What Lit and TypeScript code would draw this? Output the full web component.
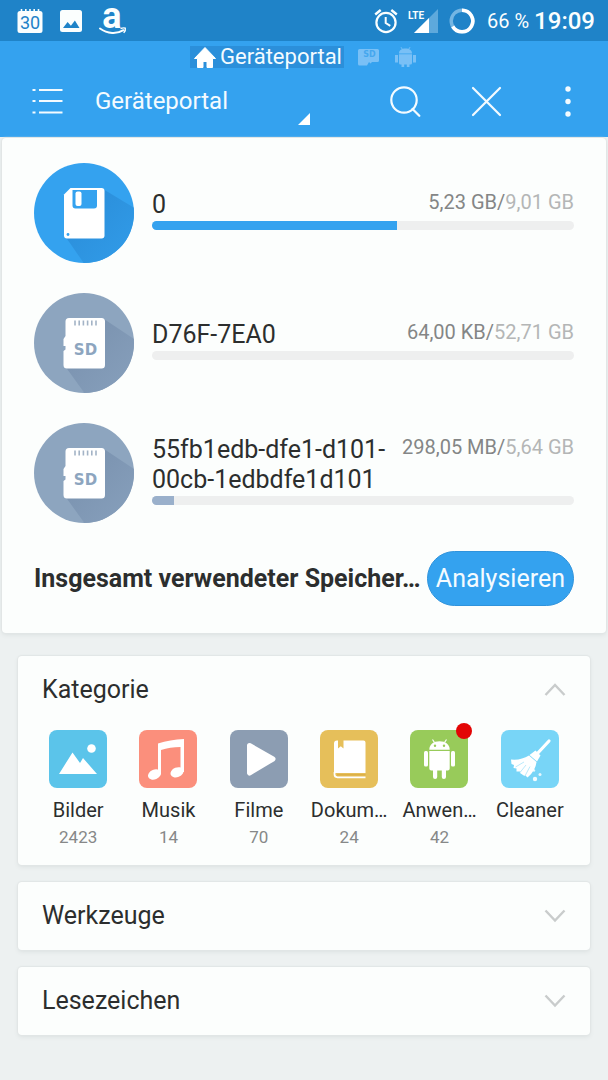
import { LitElement, html, css, svg, nothing, TemplateResult } from "lit";
import { customElement, property, state } from "lit/decorators.js";

/* ---------- status bar glyphs ---------- */

const calendarIcon = html`<svg width="26" height="26" viewBox="0 0 26 26" aria-hidden="true">
  <rect x="0.5" y="3" width="25" height="22" rx="2.5" fill="#fbfefe" />
  <path d="M4.5 1v3M8.8 1v3M13 1v3M17.2 1v3M21.500 1v3" stroke="#fbfefe" stroke-width="1.600" />
  <text x="13" y="21" text-anchor="middle" font-family="Roboto, sans-serif" font-size="18" fill="#1f83c8">30</text>
</svg>`;

const photoIcon = html`<svg width="22" height="22" viewBox="0 0 22 22" aria-hidden="true">
  <rect width="22" height="22" rx="2.5" fill="#fbfefe" />
  <path d="M3 18l4.600-6 3.300 3.800 4-5.300L19.500 18z" fill="#1f83c8" />
</svg>`;

const amazonIcon = html`<svg width="28" height="28" viewBox="0 0 28 28" aria-hidden="true">
  <text x="13" y="20.500" text-anchor="middle" font-family="Roboto, sans-serif" font-weight="700" font-size="36" fill="#fbfefe">a</text>
  <path d="M1 21.500c7.500 5.500 17 5.700 23.500 1.700" fill="none" stroke="#fbfefe" stroke-width="2" stroke-linecap="round" />
  <path d="M21.500 21.500c2-.7 4-.8 4.800-.3.400 1.200-.2 3-1.600 4.700" fill="none" stroke="#fbfefe" stroke-width="1.400" />
</svg>`;

const alarmIcon = html`<svg width="24" height="26" viewBox="0 0 24 26" fill="none" stroke="#fbfefe" aria-hidden="true">
  <circle cx="12" cy="14.500" r="9.600" stroke-width="2.200" />
  <path d="M11.700 9v6l4.600 2.800" stroke-width="2" />
  <path d="M1.200 6.500L6.700 2M22.800 6.500L17.300 2" stroke-width="2.400" />
</svg>`;

const signalIcon = html`<svg width="31" height="26" viewBox="0 0 31 26" aria-hidden="true">
  <path d="M30 1v24H6z" fill="#5ea9dc" />
  <path d="M21 10v15H6z" fill="#fff" />
  <path d="M0 0h17v12H0z" fill="#1f83c8" />
  <text x="0" y="11" font-family="'Liberation Sans Narrow', Roboto, sans-serif" font-weight="700" font-size="10" fill="#fbfefe">LTE</text>
</svg>`;

const batteryIcon = html`<svg width="26" height="26" viewBox="0 0 26 26" fill="none" aria-hidden="true">
  <circle cx="13" cy="13" r="10.800" stroke="#74b6e3" stroke-width="3.400" />
  <path d="M13 2.200A10.800 10.800 0 1 1 3.700 18.500" stroke="#fff" stroke-width="3.600" />
</svg>`;

/* ---------- header glyphs ---------- */

const homeIcon = html`<svg width="22" height="21" viewBox="0 0 22 21" aria-hidden="true">
  <path d="M11 .5L21.500 11.500H18.500V20.500H13V14.500H9V20.500H3.500V11.500H.5z" fill="#fff" stroke="#fff" stroke-linejoin="round" />
</svg>`;

const sdTabIcon = html`<svg width="21" height="17" viewBox="0 0 21 17" aria-hidden="true">
  <path d="M1.500 0h18a1.500 1.500 0 0 1 1.500 1.500v10a1.500 1.500 0 0 1-1.500 1.500H14l-1.500 1.500L11 13l-2 3.500H1.500A1.500 1.500 0 0 1 0 15V1.500A1.500 1.500 0 0 1 1.500 0z" fill="#79c0f6" />
  <text x="11.500" y="8" text-anchor="middle" font-family="'DejaVu Sans', sans-serif" font-weight="700" font-size="8" fill="#45a7ee">SD</text>
</svg>`;

const androidTabIcon = html`<svg width="21" height="20" viewBox="0 0 21 20" fill="#79c0f6" aria-hidden="true">
  <path d="M4 6.500C4 3 6.500 1.500 10.500 1.500S17 3 17 6.500zM4 7.300h13V16a1.500 1.500 0 0 1-1.500 1.500h-10A1.500 1.500 0 0 1 4 16zM0 8h3v7.500H0zM18 8h3v7.500h-3zM6.500 17h2.700v3H6.500zM11.800 17h2.700v3h-2.700z" />
  <path d="M6 .2L7.500 2.500M15 .2L13.500 2.500" stroke="#79c0f6" />
</svg>`;

const listIcon = html`<svg width="31" height="28" viewBox="0 0 31 28" stroke="#f4fbff" stroke-width="2.200" aria-hidden="true">
  <path d="M.5 3h3M.5 14h3M.5 25.500h3M7 3h23.500M7 14h23.500M7 25.500h23.500" />
</svg>`;

const searchIcon = html`<svg width="31" height="31" viewBox="0 0 31 31" fill="none" stroke="#f4fbff" stroke-width="2.200" aria-hidden="true">
  <circle cx="14" cy="14" r="12.700" />
  <path d="M22.500 23l6.800 6.800" stroke-linecap="round" />
</svg>`;

const closeIcon = html`<svg width="31" height="31" viewBox="0 0 31 31" fill="none" stroke="#f4fbff" stroke-width="2.200" stroke-linecap="round" aria-hidden="true">
  <path d="M2 2l27 27M29 2L2 29" />
</svg>`;

const moreIcon = html`<svg width="8" height="31" viewBox="0 0 8 31" fill="#f4fbff" aria-hidden="true">
  <circle cx="4" cy="3" r="2.700" /><circle cx="4" cy="15.500" r="2.700" /><circle cx="4" cy="28" r="2.700" />
</svg>`;

const cornerIcon = html`<svg width="12" height="12" viewBox="0 0 12 12" aria-hidden="true"><path d="M12 0v12H0z" fill="#fff" /></svg>`;

const chevron = (up: boolean) => html`<svg width="22" height="14" viewBox="0 0 22 14" fill="none" stroke="#c9cccc" stroke-width="2.400" aria-hidden="true">
  <path d=${up ? "M1.500 12L11 2L20.500 12" : "M1.500 1.500L11 11.500L20.500 1.500"} />
</svg>`;

/* ---------- storage discs ---------- */

const floppyDisc = html`<svg class="disc" viewBox="0 0 100 100" aria-hidden="true">
  <defs>
    <clipPath id="c"><circle cx="50" cy="50" r="50" /></clipPath>
    <linearGradient id="g" x1="0.200" y1="0.200" x2="1" y2="1"><stop offset="0" stop-color="#2b8fdb" /><stop offset="1" stop-color="#339fec" /></linearGradient>
  </defs>
  <circle cx="50" cy="50" r="50" fill="#34a2ef" />
  <path d="M69 26L112 52V112H58L31 73z" fill="url(#g)" clip-path="url(#c)" />
  <path d="M36.500 25H67.500a3 3 0 0 1 3 3V72.500a3 3 0 0 1-3 3H33a3 3 0 0 1-3-3V31.500z" fill="#fff" />
  <path d="M38.500 27h24.500V42.500a3 3 0 0 1-3 3H41.500a3 3 0 0 1-3-3z" fill="#34a2ef" />
  <rect x="41.500" y="28.500" width="6" height="14.500" rx="2" fill="#fff" />
  <circle cx="34" cy="71.500" r="1.400" fill="#34a2ef" />
</svg>`;

const sdDisc = html`<svg class="disc" viewBox="0 0 100 100" aria-hidden="true">
  <defs>
    <clipPath id="c"><circle cx="50" cy="50" r="50" /></clipPath>
    <linearGradient id="g" x1="0.200" y1="0.200" x2="1" y2="1"><stop offset="0" stop-color="#7b93b0" /><stop offset="1" stop-color="#8aa3bf" /></linearGradient>
  </defs>
  <circle cx="50" cy="50" r="50" fill="#8da5bf" />
  <path d="M70 26L112 54V112H59L31 73z" fill="url(#g)" clip-path="url(#c)" />
  <path d="M35 25H67.500a3.500 3.500 0 0 1 3.500 3.500V72a3.500 3.500 0 0 1-3.500 3.500H33A3.500 3.500 0 0 1 29.500 72V58l2-1.500V53H29.500V46l2-3V28.500A3.500 3.500 0 0 1 35 25z" fill="#fff" />
  <path d="M41 27.500v5M45.200 27.500v5M49.400 27.500v5M53.600 27.500v5M57.800 27.500v5M62 27.500v5" stroke="#a3b3c6" stroke-width="1.600" />
  <text x="51.500" y="61.500" text-anchor="middle" font-family="'DejaVu Sans', sans-serif" font-weight="700" font-size="15" fill="#8da5bf">SD</text>
</svg>`;

/* ---------- category tiles ---------- */

const tile = (color: string, art: TemplateResult<2>) => html`<svg class="tile" viewBox="0 0 58 58" aria-hidden="true">
  <rect width="58" height="58" rx="8" fill=${color} />${art}
</svg>`;

const pictureArt = svg`<path d="M10 44L23.500 22.500L31 33L34 28L48 44z" fill="#fff"/><circle cx="42.500" cy="18.500" r="4.300" fill="#fff"/>`;

const musicArt = svg`<path d="M19 13.500Q31 9.500 45 9V42h-3.500V17Q31 17 22 20V44h-3z" fill="#fff"/>
  <ellipse cx="15.500" cy="44.500" rx="6.800" ry="4.800" transform="rotate(-22 15.500 44.500)" fill="#fff"/>
  <ellipse cx="38" cy="42.300" rx="6.800" ry="4.800" transform="rotate(-22 38 42.300)" fill="#fff"/>`;

const playArt = svg`<path d="M19.500 15.500L43 29L19.500 43z" fill="#fff" stroke="#fff" stroke-width="5" stroke-linejoin="round"/>`;

const bookArt = svg`<path d="M17 10.500H43.500a2 2 0 0 1 2 2V43H16a2 2 0 0 0-2 2V13.500a3 3 0 0 1 3-3z" fill="#fff"/>
  <path d="M45.500 47.300H17.500a3 3 0 0 1-3-3V42" fill="none" stroke="#fff" stroke-width="1.700"/>
  <path d="M18 10h5.500v8.500l-2.700-2.300-2.800 2.300z" fill="#e6bf5a"/>
  <path d="M17 44.800h28.500" stroke="#dcae45" stroke-width="1.400"/>`;

const robotArt = svg`<path d="M19.300 19.800C19.300 14.500 23.500 11.300 29.500 11.300S39.700 14.500 39.700 19.800z" fill="#fff"/>
  <path d="M19.300 21H39.700V38.500a2 2 0 0 1-2 2H36V47a2.100 2.100 0 0 1-4.200 0V40.500H27.200V47a2.100 2.100 0 0 1-4.200 0V40.500H21.300a2 2 0 0 1-2-2z" fill="#fff"/>
  <rect x="14" y="21" width="4" height="15.500" rx="1.500" fill="#fff"/><rect x="41" y="21" width="4" height="15.500" rx="1.500" fill="#fff"/>
  <path d="M22.500 9.500l2 3M36.500 9.500l-2 3" stroke="#fff" stroke-width="1.200"/>
  <circle cx="25" cy="15.800" r="1.200" fill="#98cb5a"/><circle cx="34" cy="15.800" r="1.200" fill="#98cb5a"/>`;

const broomArt = svg`<path d="M48 11L35 25" stroke="#fff" stroke-width="3.200" stroke-linecap="round"/>
  <path d="M34.500 20.500L39.500 25.500L36 31.500L28.500 25z" fill="#fff"/>
  <path d="M28 25.500L35.500 32Q34.500 41 26.500 47.500L24 45L23.500 46L19 43L19.500 41.500L15.500 41.500L15.500 38.500L12.500 38L13 35L10.500 34L10 29.500Q20 30.500 28 25.500z" fill="#fff"/>
  <path d="M25 35L19 42.500M23 32L14.500 37M29 36.500L24.500 45" stroke="#a8e3fa" stroke-width=".8"/>
  <circle cx="34" cy="49" r="2.200" fill="#fff" opacity=".9"/><circle cx="39" cy="44.500" r="1.500" fill="#fff" opacity=".8"/><circle cx="33" cy="40.500" r="1.200" fill="#fff" opacity=".8"/>`;

interface Volume { name: string; used: string; total: string; percent: number; internal?: boolean }
interface Category { label: string; count?: number; color: string; art: TemplateResult<2>; badge?: boolean }

const volumes: Volume[] = [
  { name: "0", used: "5,23 GB", total: "9,01 GB", percent: 58, internal: true },
  { name: "D76F-7EA0", used: "64,00 KB", total: "52,71 GB", percent: 0 },
  { name: "55fb1edb-dfe1-d101-00cb-1edbdfe1d101", used: "298,05 MB", total: "5,64 GB", percent: 5.2 },
];

const categories: Category[] = [
  { label: "Bilder", count: 2423, color: "#5bc4ea", art: pictureArt },
  { label: "Musik", count: 14, color: "#fb8f7c", art: musicArt },
  { label: "Filme", count: 70, color: "#8c9db2", art: playArt },
  { label: "Dokum…", count: 24, color: "#e6bf5a", art: bookArt },
  { label: "Anwen…", count: 42, color: "#98cb5a", art: robotArt, badge: true },
  { label: "Cleaner", color: "#78d5f7", art: broomArt },
];

const shared = css`
  * { box-sizing: border-box; }
  svg { display: block; flex: none; }
  button { font: inherit; color: inherit; background: none; border: 0; padding: 0; margin: 0; cursor: pointer; }
`;

@customElement("status-bar")
export class StatusBar extends LitElement {
  static styles = [shared, css`
    :host { display: flex; align-items: center; height: 41px; padding: 0 13px 0 17px; background: #1f83c8; color: #fbfefe; }
    .left { display: flex; align-items: center; gap: 17px; flex: 1; }
    .right { display: flex; align-items: center; gap: 10px; }
    .level { font-size: 20px; margin-left: 2px; }
    .clock { font-size: 24px; font-weight: 500; margin-left: -5px; }
  `];
  render() {
    return html`
      <div class="left">${calendarIcon}${photoIcon}${amazonIcon}</div>
      <div class="right">${alarmIcon}${signalIcon}${batteryIcon}
        <span class="level">66 %</span><span class="clock">19:09</span>
      </div>`;
  }
}

@customElement("storage-row")
export class StorageRow extends LitElement {
  @property({ attribute: false }) volume!: Volume;
  static styles = [shared, css`
    :host { display: flex; align-items: center; gap: 18px; }
    .disc { width: 100px; height: 100px; }
    .info { flex: 1; min-width: 0; padding-bottom: 6px; }
    .line { display: flex; align-items: flex-start; gap: 12px; }
    .name { flex: 1; font-size: 25px; line-height: 30px; color: #2c2e2e; }
    .size { font-size: 20px; line-height: 24px; color: #848686; white-space: nowrap; }
    .total { color: #b4b6b6; }
    .track { height: 9px; margin-top: 1px; border-radius: 5px; background: #eeefef; overflow: hidden; }
    .fill { height: 100%; background: #9ab0cb; }
    .internal { background: #34a2ef; }
  `];
  render() {
    const v = this.volume;
    return html`
      ${v.internal ? floppyDisc : sdDisc}
      <div class="info">
        <div class="line">
          <span class="name">${v.name}</span>
          <span class="size">${v.used}/<span class="total">${v.total}</span></span>
        </div>
        <div class="track"><div class="fill ${v.internal ? "internal" : ""}" style="width:${v.percent}%"></div></div>
      </div>`;
  }
}

@customElement("fold-card")
export class FoldCard extends LitElement {
  @property() heading = "";
  @property({ type: Boolean }) open = false;
  static styles = [shared, css`
    :host { display: block; background: #fcfefd; border-radius: 4px; box-shadow: 0 0 1px 1px #e2e6e6, 0 2px 4px #dce1e1; }
    .head { display: flex; align-items: center; justify-content: space-between; width: 100%; height: 68px; padding: 0 24px; text-align: left; }
    .heading { font-size: 25px; line-height: 30px; color: #2c2e2e; }
  `];
  render() {
    return html`
      <button class="head" aria-expanded=${this.open} @click=${() => (this.open = !this.open)}>
        <span class="heading">${this.heading}</span>${chevron(this.open)}
      </button>
      ${this.open ? html`<slot></slot>` : nothing}`;
  }
}

@customElement("app-root")
export class AppRoot extends LitElement {
  @state() private items = categories;
  static styles = [shared, css`
    :host { display: flex; flex-direction: column; min-height: 100vh; background: #edf1f1; font-family: Roboto, sans-serif; color: #2c2e2e; }
    .header { background: #34a2ef; color: #f4fbff; padding-top: 5px; }
    .tabs { display: flex; justify-content: center; align-items: center; gap: 12px; }
    .tab { display: flex; align-items: center; gap: 4px; height: 22px; font-size: 22px; line-height: 22px; }
    .current { background: #2b8fda; padding: 0 2px 0 4px; }
    .faded { padding: 0 2px; }
    .toolbar { display: flex; align-items: center; height: 69px; padding: 0 36px 3px 32px; }
    .picker { flex: 1; display: flex; align-items: flex-end; justify-content: space-between; height: 48px; margin: 0 80px 0 32px; font-size: 24px; line-height: 48px; }
    .actions { display: flex; align-items: center; gap: 50px; }
    .more { margin-left: 12px; }
    .storage { display: flex; flex-direction: column; gap: 28px; margin: 1px 2px 0; padding: 25px 32px 27px; background: #fcfefd; border-radius: 4px; box-shadow: 0 0 1px 1px #e2e6e6, 0 2px 4px #dce1e1; }
    .volumes { display: flex; flex-direction: column; gap: 30px; }
    .summary { display: flex; align-items: center; justify-content: space-between; gap: 4px; }
    .sum { min-width: 0; margin: 0; font-size: 25px; line-height: 30px; font-weight: 700; white-space: nowrap; overflow: hidden; text-overflow: ellipsis; }
    .analyse { flex: none; height: 55px; padding: 0 8px; border-radius: 28px; border: 1px solid #2f93dc; background: #34a2ef; color: #f4fbff; font-size: 25px; }
    .cards { display: flex; flex-direction: column; gap: 17px; padding: 23px 18px 45px; }
    .grid { display: grid; grid-template-columns: repeat(6, 1fr); padding: 6px 15px 15px; }
    .item { display: flex; flex-direction: column; align-items: center; justify-content: flex-start; min-width: 0; min-height: 120px; }
    .art { position: relative; }
    .tile { width: 58px; height: 58px; }
    .badge { position: absolute; top: -7px; right: -4px; width: 16px; height: 16px; border-radius: 50%; background: #e30505; }
    .label { margin-top: 10px; font-size: 20px; line-height: 24px; white-space: nowrap; }
    .count { margin-top: 5px; font-size: 17px; line-height: 20px; color: #868888; }
  `];
  render() {
    return html`
      <status-bar></status-bar>
      <header class="header">
        <nav class="tabs">
          <button class="tab current">${homeIcon}<span>Geräteportal</span></button>
          <button class="tab faded" aria-label="SD">${sdTabIcon}</button>
          <button class="tab faded" aria-label="Apps">${androidTabIcon}</button>
        </nav>
        <div class="toolbar">
          <button aria-label="Menü">${listIcon}</button>
          <button class="picker"><span>Geräteportal</span>${cornerIcon}</button>
          <div class="actions">
            <button aria-label="Suchen">${searchIcon}</button>
            <button aria-label="Schließen">${closeIcon}</button>
            <button class="more" aria-label="Mehr">${moreIcon}</button>
          </div>
        </div>
      </header>
      <main>
        <section class="storage">
          <div class="volumes">
            ${volumes.map((v) => html`<storage-row .volume=${v}></storage-row>`)}
          </div>
          <div class="summary">
            <p class="sum">Insgesamt verwendeter Speicher…</p>
            <button class="analyse">Analysieren</button>
          </div>
        </section>
        <div class="cards">
          <fold-card heading="Kategorie" open>
            <div class="grid">
              ${this.items.map((c) => html`
                <button class="item">
                  <span class="art">${tile(c.color, c.art)}${c.badge ? html`<span class="badge"></span>` : nothing}</span>
                  <span class="label">${c.label}</span>
                  ${c.count === undefined ? nothing : html`<span class="count">${c.count}</span>`}
                </button>`)}
            </div>
          </fold-card>
          <fold-card heading="Werkzeuge"></fold-card>
          <fold-card heading="Lesezeichen"></fold-card>
        </div>
      </main>`;
  }
}
